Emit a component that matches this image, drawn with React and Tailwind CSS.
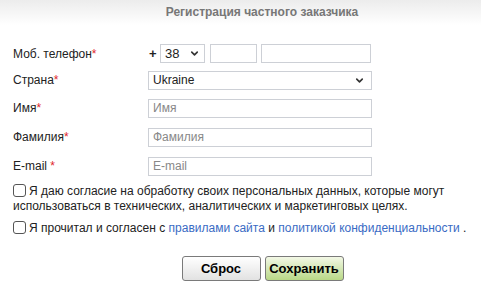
import { ChevronDown } from 'lucide-react';

const font = { fontFamily: '"Liberation Sans", Arial, sans-serif' };

function Label({ children, spaced }) {
  return (
    <div className="w-[135px] shrink-0 text-[12px] text-[#222]">
      {children}
      {spaced ? ' ' : ''}
      <span className="text-[#e0262b]">*</span>
    </div>
  );
}

function Box({ className = '', children }) {
  return (
    <div className={`h-[19px] border border-[#cdd0d6] bg-white flex items-center text-[12px] ${className}`}>
      {children}
    </div>
  );
}

function Check() {
  return <span className="inline-block w-[13px] h-[13px] border border-[#555] rounded-[3px] bg-white align-[-2px] mr-[3px]" />;
}

export default function App() {
  return (
    <div className="w-[481px] h-[293px] bg-white overflow-hidden" style={font}>
      {/* header */}
      <div className="h-[25px] bg-gradient-to-b from-[#ececec] to-white flex items-center justify-center pl-[43px] pb-[2px]">
        <span className="text-[12px] font-bold text-[#777]">Регистрация частного заказчика</span>
      </div>

      <div className="pl-[13px] pt-[19px]">
        {/* phone */}
        <div className="flex items-center h-[19px]">
          <Label>Моб. телефон</Label>
          <span className="text-[13px] text-[#222] w-[12px] pl-[1px] font-bold">+</span>
          <Box className="w-[45px] pl-[4px] justify-between pr-[4px] text-[#222] text-[13px]">
            38 <ChevronDown size={11} strokeWidth={3.5} className="text-[#333]" />
          </Box>
          <Box className="w-[47px] ml-[5px]" />
          <Box className="w-[110px] ml-[4px]" />
        </div>

        {/* country */}
        <div className="flex items-center h-[18px] mt-[8px]">
          <Label>Страна</Label>
          <Box className="w-[224px] h-[18px] pl-[4px] pr-[6px] justify-between text-[#222]">
            Ukraine <ChevronDown size={11} strokeWidth={3.5} className="text-[#333]" />
          </Box>
        </div>

        {[
          ['Имя', 'Имя', false],
          ['Фамилия', 'Фамилия', false],
          ['E-mail', 'E-mail', true],
        ].map(([label, ph, spaced], i) => (
          <div key={label} className={`flex items-center h-[18px] ${i === 0 ? 'mt-[10px]' : 'mt-[11px]'}`}>
            <Label spaced={spaced}>{label}</Label>
            <Box className="w-[224px] h-[18px] pl-[4px] text-[#888]">{ph}</Box>
          </div>
        ))}

        {/* consents */}
        <div className="mt-[9px] pr-[20px] text-[12px] leading-[15px] text-[#222]">
          <Check />Я даю согласие на обработку своих персональных данных, которые могут использоваться в технических, аналитических и маркетинговых целях.
        </div>
        <div className="mt-[7px] text-[12px] leading-[15px] text-[#222]">
          <Check />Я прочитал и согласен с{' '}
          <a className="text-[#3a6bc4]">правилами сайта</a> и{' '}
          <a className="text-[#3a6bc4]">политикой конфиденциальности</a> .
        </div>
      </div>

      {/* buttons */}
      <div className="flex justify-center gap-[4px] mt-[20px] pl-[44px]">
        <button className="w-[79px] h-[25px] border border-[#7a7a7a] rounded-[3px] bg-gradient-to-b from-white to-[#e2e2e2] text-[13px] font-bold text-black">
          Сброс
        </button>
        <button className="w-[79px] h-[25px] border border-[#7a7a7a] rounded-[3px] bg-gradient-to-b from-[#f3f8e6] to-[#b9d886] text-[13px] font-bold text-black">
          Сохранить
        </button>
      </div>
    </div>
  );
}
